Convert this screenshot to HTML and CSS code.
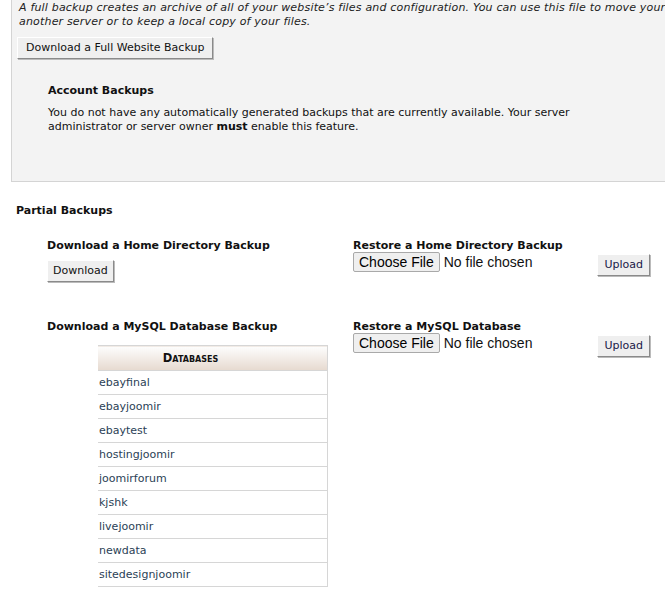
FILE: index.html
```html
<!DOCTYPE html>
<html>
    <head>
        <title>Backups</title>
        <link rel="stylesheet" href="styles.css">
    </head>
    <body>
        <div class="full-panel">
            <p class="intro">A full backup creates an archive of all of your website’s files and configuration. You can use this file to move your<br>another server or to keep a local copy of your files.</p>
            <button class="btn btn-full">Download a Full Website Backup</button>
            <div class="account">
                <h4>Account Backups</h4>
                <p>You do not have any automatically generated backups that are currently available. Your server administrator or server owner <b>must</b> enable this feature.</p>
            </div>
        </div>

        <h3 class="partial-title">Partial Backups</h3>

        <div class="partial-row">
            <div class="col-left">
                <h4>Download a Home Directory Backup</h4>
                <button class="btn btn-download">Download</button>
            </div>
            <div class="col-right">
                <h4>Restore a Home Directory Backup</h4>
                <div class="upload-line">
                    <input type="file" class="file" />
                    <button class="btn btn-upload">Upload</button>
                </div>
            </div>
        </div>

        <div class="partial-row row-db">
            <div class="col-left">
                <h4>Download a MySQL Database Backup</h4>
                <table class="db-table">
                    <thead>
                        <tr><th>Databases</th></tr>
                    </thead>
                    <tbody>
                        <tr><td>ebayfinal</td></tr>
                        <tr><td>ebayjoomir</td></tr>
                        <tr><td>ebaytest</td></tr>
                        <tr><td>hostingjoomir</td></tr>
                        <tr><td>joomirforum</td></tr>
                        <tr><td>kjshk</td></tr>
                        <tr><td>livejoomir</td></tr>
                        <tr><td>newdata</td></tr>
                        <tr><td>sitedesignjoomir</td></tr>
                    </tbody>
                </table>
            </div>
            <div class="col-right">
                <h4>Restore a MySQL Database</h4>
                <div class="upload-line">
                    <input type="file" class="file" />
                    <button class="btn btn-upload">Upload</button>
                </div>
            </div>
        </div>
    </body>
</html>
```

FILE: styles.css
```css
body {
    margin: 0;
    font-family: "DejaVu Sans", Verdana, sans-serif;
    font-size: 11px;
    color: #111;
    background: #fff;
    overflow: hidden;
}

h3, h4, p {
    margin: 0;
}

.full-panel {
    margin-left: 11px;
    height: 182px;
    box-sizing: border-box;
    padding: 1px 0 0 7px;
    background-color: #f3f3f3;
    border-left: 1px solid #d4d4d4;
    border-bottom: 1px solid #d4d4d4;
}

.intro {
    font-style: italic;
    line-height: 14px;
    width: 700px;
    color: #222;
    letter-spacing: 0.18px;
}

.btn {
    font-family: "DejaVu Sans", Verdana, sans-serif;
    font-size: 11px;
    color: #111;
    background-color: #efefef;
    border: 1px solid;
    border-color: #fff #8a8a8a #8a8a8a #fff;
    box-shadow: 1px 1px 0 #bbb;
    padding: 3px 6px 4px;
    cursor: pointer;
}

.btn-full {
    margin-top: 8px;
    margin-left: -2px;
    height: 22px;
    padding: 3px 8px 4px;
}

.account {
    padding: 25px 0 0 29px;
}

.account h4 {
    font-size: 11px;
    margin-bottom: 9px;
}

.account p {
    line-height: 14px;
    width: 560px;
}

.partial-title {
    font-size: 11px;
    margin: 22px 0 0 16px;
}

.partial-row {
    display: flex;
    padding-left: 47px;
    margin-top: 22px;
}

.row-db {
    margin-top: 38px;
}

.col-left {
    width: 306px;
}

.col-right {
    width: 297px;
}

.partial-row h4 {
    font-size: 11px;
    line-height: 13px;
}

.btn-download {
    margin-top: 8px;
    height: 22px;
    padding: 3px 5px 4px;
}

.upload-line {
    display: flex;
    justify-content: space-between;
    align-items: flex-start;
}

.file {
    width: 200px;
    font-family: "Liberation Sans", Arial, sans-serif;
    font-size: 14px;
    color: #111;
}

.file::file-selector-button {
    font-family: "Liberation Sans", Arial, sans-serif;
    font-size: 14px;
    background-color: #efefef;
    border: 1px solid #a9a9a9;
    border-radius: 2px;
    padding: 1px 5px;
    margin-right: 4px;
}

.btn-upload {
    margin-top: 2px;
    height: 22px;
    color: #1a1848;
}

.db-table {
    margin: 12px 0 0 51px;
    width: 230px;
    border-collapse: collapse;
    border-top: 1px solid #d6d6d6;
    border-right: 1px solid #d6d6d6;
}

.db-table th {
    height: 24px;
    padding: 0 44px 0 0;
    font-variant: small-caps;
    font-size: 11.5px;
    font-weight: bold;
    background: linear-gradient(#fdfdfd, #e6d9cf);
    border-bottom: 1px solid #d6d6d6;
}

.db-table td {
    height: 23px;
    padding: 0 0 0 1px;
    color: #2b3f56;
    border-bottom: 1px solid #d6d6d6;
}
```
